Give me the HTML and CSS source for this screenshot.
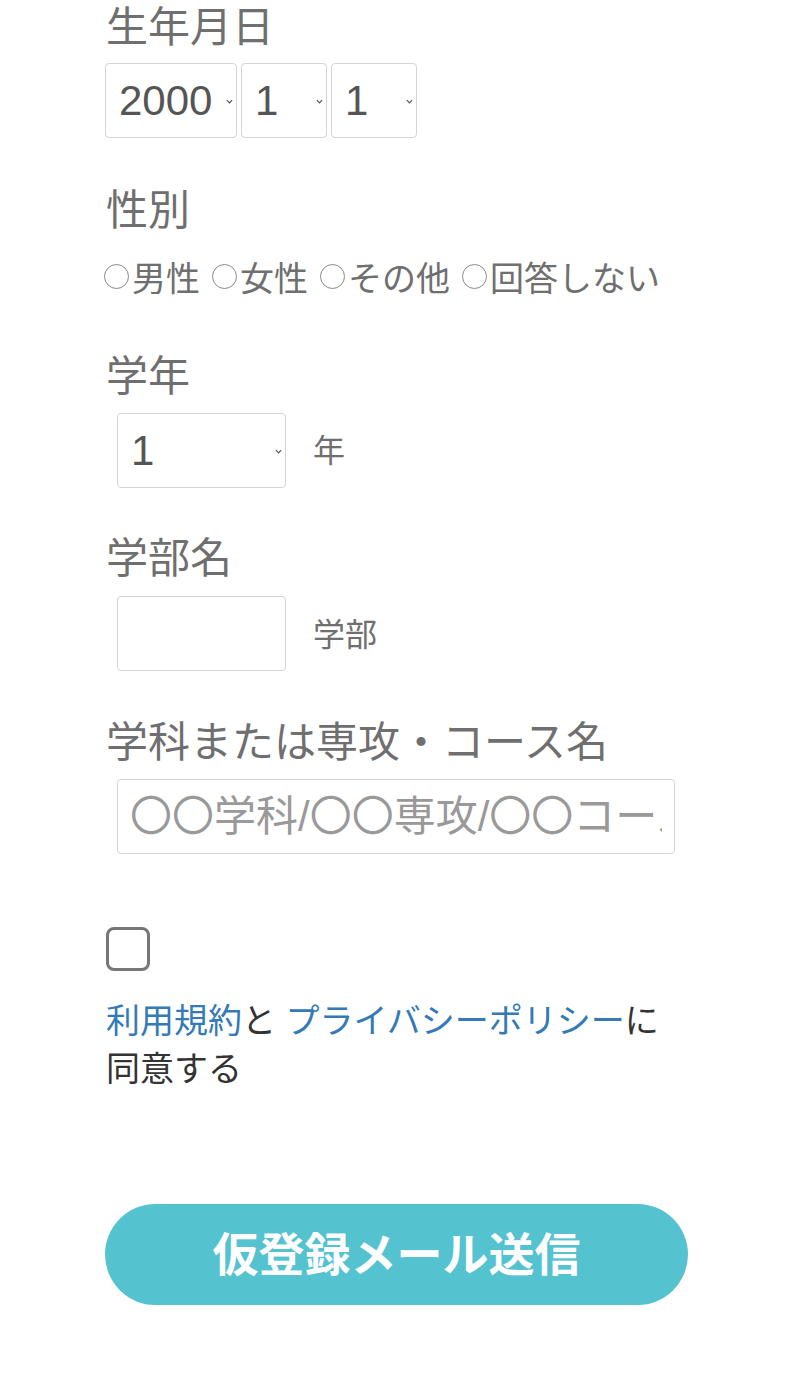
FILE: index.html
```html
<!DOCTYPE html>
<html lang="ja">
<head>
<meta charset="utf-8">
<title>仮登録</title>
<link rel="stylesheet" href="styles.css">
</head>
<body>
<form class="form">
  <div class="group g-birth">
    <div class="label">生年月日</div>
    <div class="row selects">
      <div class="sel sel-year"><select><option>2000</option></select><span class="chev"><svg viewBox="0 0 8 5" width="7" height="5"><path d="M1 1 L4 4 L7 1" fill="none" stroke="#555" stroke-width="1.4"/></svg></span></div>
      <div class="sel sel-md"><select><option>1</option></select><span class="chev"><svg viewBox="0 0 8 5" width="7" height="5"><path d="M1 1 L4 4 L7 1" fill="none" stroke="#555" stroke-width="1.4"/></svg></span></div>
      <div class="sel sel-md"><select><option>1</option></select><span class="chev"><svg viewBox="0 0 8 5" width="7" height="5"><path d="M1 1 L4 4 L7 1" fill="none" stroke="#555" stroke-width="1.4"/></svg></span></div>
    </div>
  </div>

  <div class="group g-gender">
    <div class="label">性別</div>
    <div class="radios">
      <label class="radio"><span class="circle"></span>男性</label>
      <label class="radio"><span class="circle"></span>女性</label>
      <label class="radio"><span class="circle"></span>その他</label>
      <label class="radio"><span class="circle"></span>回答しない</label>
    </div>
  </div>

  <div class="group g-grade">
    <div class="label">学年</div>
    <div class="row indent">
      <div class="sel sel-grade"><select><option>1</option></select><span class="chev"><svg viewBox="0 0 8 5" width="7" height="5"><path d="M1 1 L4 4 L7 1" fill="none" stroke="#555" stroke-width="1.4"/></svg></span></div>
      <span class="suffix">年</span>
    </div>
  </div>

  <div class="group g-faculty">
    <div class="label">学部名</div>
    <div class="row indent">
      <input class="text short" type="text">
      <span class="suffix">学部</span>
    </div>
  </div>

  <div class="group g-dept">
    <div class="label">学科または専攻・コース名</div>
    <div class="row indent">
      <input class="text long" type="text" placeholder="〇〇学科/〇〇専攻/〇〇コース">
    </div>
  </div>

  <div class="agree">
    <span class="checkbox"></span>
    <p class="agree-text"><a href="#">利用規約</a>と <a href="#">プライバシーポリシー</a>に同意する</p>
  </div>

  <button type="button" class="submit">仮登録メール送信</button>
</form>
</body>
</html>
```

FILE: styles.css
```css
html, body {
  margin: 0;
  padding: 0;
  background: #fff;
}
body {
  font-family: "Liberation Sans", "Noto Sans CJK JP", sans-serif;
  color: #333;
}
.form {
  width: 582px;
  margin-left: 105px;
  padding-top: 0;
}
.label {
  font-size: 42px;
  line-height: 56px;
  height: 56px;
  color: #6f6f6f;
  padding-left: 1px;
  white-space: nowrap;
}
.row {
  display: flex;
  align-items: center;
}
.indent {
  padding-left: 12px;
}
.g-birth .selects {
  margin-top: 7px;
  gap: 4px;
}
.g-birth { margin-bottom: 45px; }
.g-gender { margin-bottom: 53px; }
.g-grade { margin-bottom: 43px; }
.g-faculty { margin-bottom: 44px; }
.g-dept { margin-bottom: 73px; }
.g-grade .row, .g-faculty .row, .g-dept .row {
  margin-top: 8px;
}
.g-faculty .row { margin-top: 9px; }

.sel {
  position: relative;
  height: 75px;
}
.sel select {
  -webkit-appearance: none;
  appearance: none;
  box-sizing: border-box;
  width: 100%;
  height: 75px;
  border: 1px solid #d4d4d4;
  border-radius: 4px;
  background: #fff;
  color: #555;
  font-family: "Liberation Sans", "Noto Sans CJK JP", sans-serif;
  font-size: 42px;
  padding: 0 0 0 13px;
  margin: 0;
  outline: none;
}
.sel-year { width: 132px; }
.sel-md { width: 86px; }
.sel-grade { width: 169px; }
.chev {
  position: absolute;
  right: 4px;
  top: 36px;
  width: 7px;
  height: 5px;
  line-height: 0;
}
.suffix {
  font-size: 32px;
  color: #6f6f6f;
  margin-left: 27px;
  line-height: 40px;
}
.g-faculty .suffix { margin-top: 2px; }

.radios {
  margin-top: 17px;
  display: flex;
  align-items: center;
  height: 40px;
  font-size: 34px;
  color: #6f6f6f;
  white-space: nowrap;
}
.radio {
  display: flex;
  align-items: center;
  margin-right: 13px;
}
.circle {
  display: inline-block;
  box-sizing: border-box;
  width: 25px;
  height: 25px;
  border: 1px solid #8a8a8a;
  border-radius: 50%;
  margin-right: 3px;
  margin-left: -1px;
}

.text {
  box-sizing: border-box;
  height: 75px;
  border: 1px solid #d4d4d4;
  border-radius: 4px;
  background: #fff;
  padding: 0 12px;
  font-family: "Liberation Sans", "Noto Sans CJK JP", sans-serif;
  font-size: 42px;
  color: #555;
  margin: 0;
  outline: none;
}
.text::placeholder {
  color: #999;
}
.short { width: 169px; }
.long { width: 558px; }

.agree {
  margin-bottom: 111px;
}
.checkbox {
  display: block;
  box-sizing: border-box;
  width: 44px;
  height: 44px;
  border: 3px solid #777;
  border-radius: 8px;
  margin-left: 1px;
}
.agree-text {
  margin: 26px 0 0 1px;
  font-size: 34px;
  line-height: 48px;
  color: #333;
}
.agree-text a {
  color: #337ab7;
  text-decoration: none;
}

.submit {
  display: block;
  width: 583px;
  height: 101px;
  border: none;
  border-radius: 51px;
  background: #54c2cf;
  color: #fff;
  font-family: "Noto Sans CJK JP", sans-serif;
  font-size: 46px;
  font-weight: 700;
  padding: 0 0 8px 0;
  margin: 0;
  cursor: pointer;
}
```
